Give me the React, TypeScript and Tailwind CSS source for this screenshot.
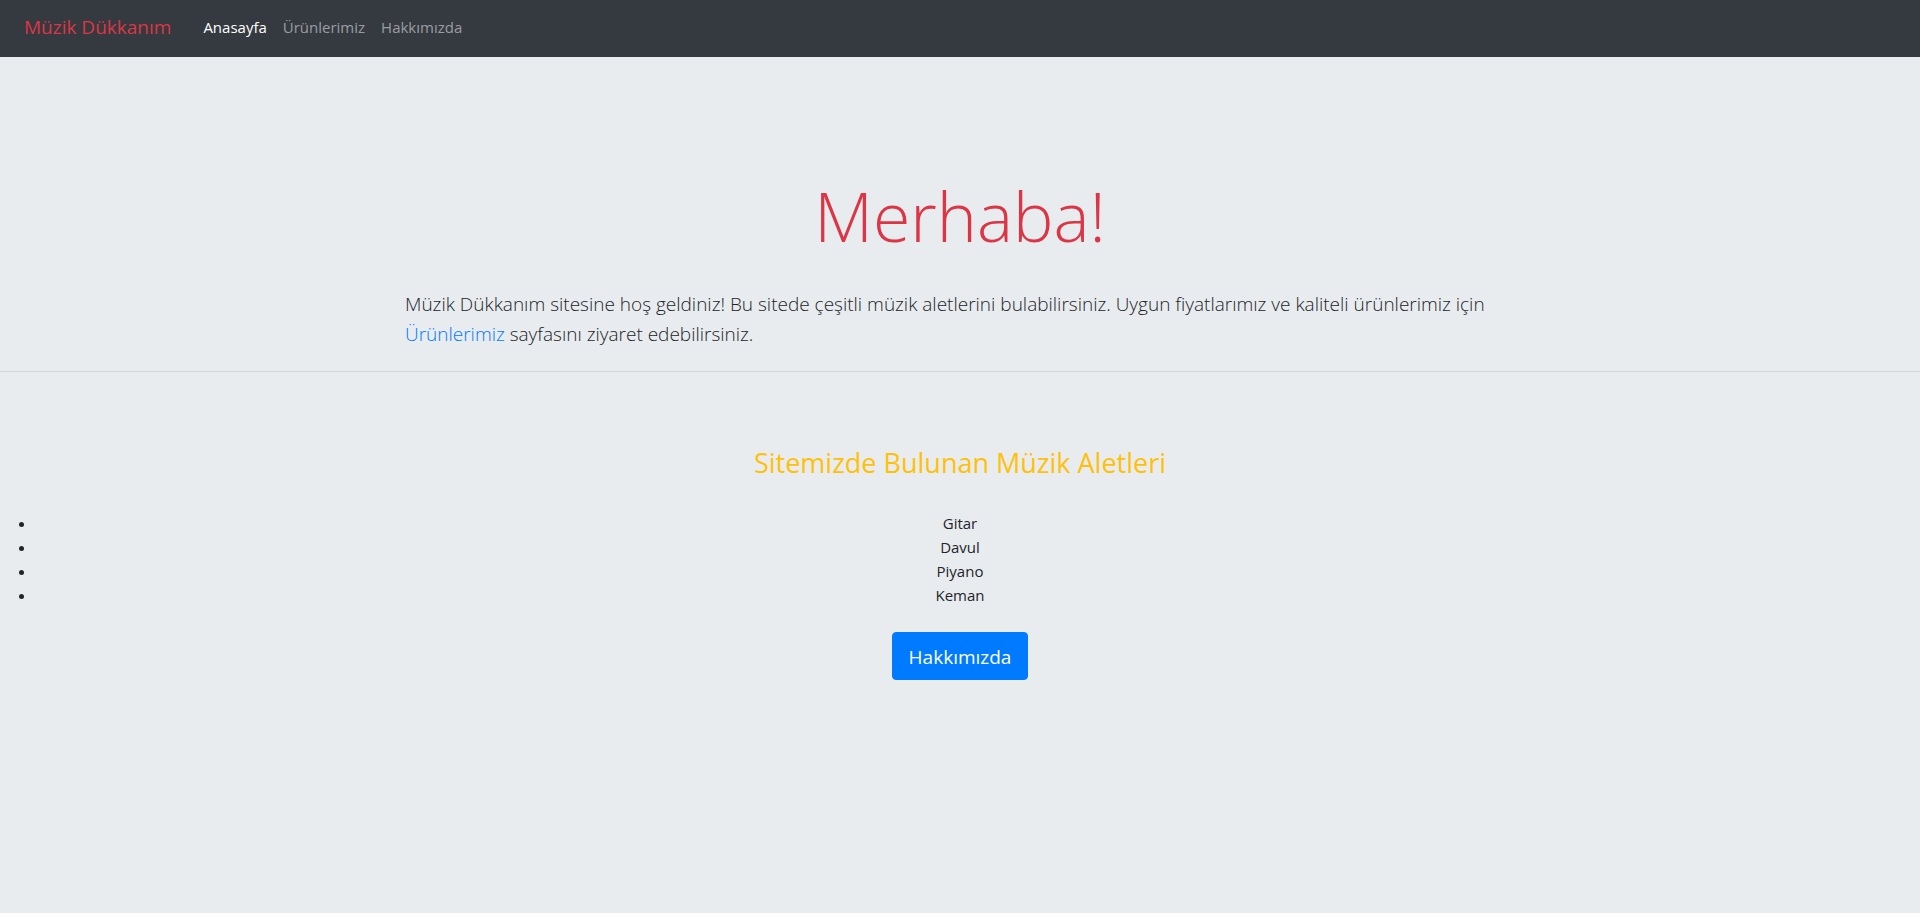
const navLinks = [
  { label: "Anasayfa", href: "#", active: true },
  { label: "Ürünlerimiz", href: "#urunlerimiz", active: false },
  { label: "Hakkımızda", href: "#hakkimizda", active: false },
];

const instruments = ["Gitar", "Davul", "Piyano", "Keman"];

function Navbar() {
  return (
    <nav className="flex h-[57px] items-center bg-[#343a40] px-6 pb-1">
      <a href="#" className="mr-8 text-[19px] leading-[30px] text-[#dc3545]">
        Müzik Dükkanım
      </a>
      <ul className="flex gap-4">
        {navLinks.map((link) => (
          <li key={link.label}>
            <a href={link.href} className={link.active ? "text-white" : "text-white/50"}>
              {link.label}
            </a>
          </li>
        ))}
      </ul>
    </nav>
  );
}

export default function App() {
  return (
    <div className="min-h-screen bg-[#e9ecef] font-['Open_Sans','Noto_Sans',sans-serif] text-[15px] leading-6 text-[#212529]">
      <Navbar />
      <main className="pt-[116px] pb-16">
        <h1 className="text-center text-[68px] leading-[86px] font-light text-[#dc3545]">Merhaba!</h1>
        <p className="mx-auto mt-[30px] max-w-[1110px] text-[19px] leading-[30px] font-light">
          Müzik Dükkanım sitesine hoş geldiniz! Bu sitede çeşitli müzik aletlerini bulabilirsiniz. Uygun
          fiyatlarımız ve kaliteli ürünlerimiz için{" "}
          <a href="#urunlerimiz" className="text-[#007bff]">
            Ürünlerimiz
          </a>{" "}
          sayfasını ziyaret edebilirsiniz.
        </p>
        <hr className="mt-[22px] border-black/10" />
        <section className="mt-[74px] text-center">
          <h2 className="text-[27px] leading-[34px] text-[#ffc107]">Sitemizde Bulunan Müzik Aletleri</h2>
          <ul className="mt-[31px] list-disc px-9">
            {instruments.map((name) => (
              <li key={name}>{name}</li>
            ))}
          </ul>
          <a
            href="#hakkimizda"
            className="mt-[25px] inline-block rounded border border-[#007bff] bg-[#007bff] px-4 pt-2 pb-1.5 text-[19px] leading-8 text-white"
          >
            Hakkımızda
          </a>
        </section>
      </main>
    </div>
  );
}
